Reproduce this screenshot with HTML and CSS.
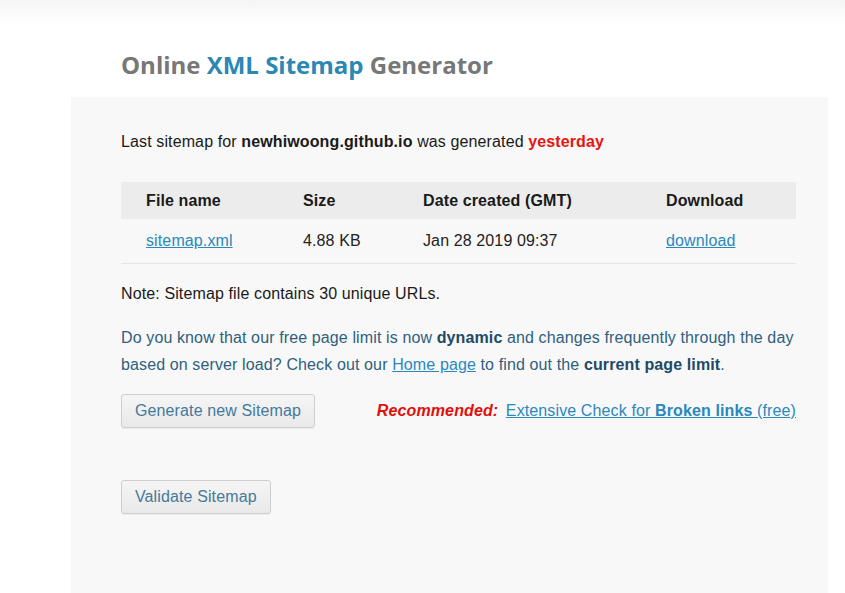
FILE: index.html
```html
<!DOCTYPE html>
<html>
<head>
<meta charset="utf-8">
<link rel="stylesheet" href="styles.css">
</head>
<body>
<header class="top">
  <h1 class="title">Online <span class="accent">XML Sitemap</span> Generator</h1>
</header>
<main class="panel">
  <p class="last">Last sitemap for <b>newhiwoong.github.io</b> was generated <b class="red">yesterday</b></p>
  <table class="files">
    <thead>
      <tr><th class="c1">File name</th><th class="c2">Size</th><th class="c3">Date created (GMT)</th><th class="c4">Download</th></tr>
    </thead>
    <tbody>
      <tr><td><a href="#">sitemap.xml</a></td><td>4.88 KB</td><td>Jan 28 2019 09:37</td><td><a href="#">download</a></td></tr>
    </tbody>
  </table>
  <p class="note">Note: Sitemap file contains 30 unique URLs.</p>
  <p class="info">Do you know that our free page limit is now <b>dynamic</b> and changes frequently through the day based on server load? Check out our <a href="#">Home page</a> to find out the <b>current page limit</b>.</p>
  <div class="actions">
    <button class="btn">Generate new Sitemap</button>
    <div class="rec"><span class="rec-label">Recommended:</span> <a href="#">Extensive Check for <b>Broken links </b>(free)</a></div>
  </div>
  <div class="validate">
    <button class="btn">Validate Sitemap</button>
  </div>
</main>
</body>
</html>
```

FILE: styles.css
```css
html, body {
  margin: 0;
  padding: 0;
}
body {
  background: linear-gradient(#f5f5f5 0, #ffffff 26px) no-repeat #fff;
  font-family: "Liberation Sans", Arial, sans-serif;
  font-size: 16px;
  letter-spacing: 0.12px;
  color: #1a1a1a;
  min-height: 593px;
}
.top {
  padding: 49px 0 0 121px;
  height: 48px;
}
.title {
  margin: 0;
  font-family: "Open Sans", sans-serif;
  font-weight: 700;
  font-size: 24px;
  line-height: 32px;
  color: #777777;
  letter-spacing: 0;
}
.accent {
  color: #2b87b3;
}
.panel {
  margin-left: 71px;
  width: 675px;
  padding: 35px 32px 80px 50px;
  background: #f8f8f8;
  min-height: 381px;
}
.last {
  margin: 0;
  line-height: 20px;
}
.red {
  color: #e8150f;
}
.files {
  margin-top: 30px;
  width: 675px;
  border-collapse: collapse;
  font-size: 16px;
}
.files th {
  text-align: left;
  background: #ececec;
  height: 37px;
  padding: 0;
  font-weight: 700;
  color: #1a1a1a;
}
.files td {
  height: 44px;
  padding: 0;
  border-bottom: 1px solid #e4e4e4;
  color: #222;
}
.files th:first-child, .files td:first-child {
  padding-left: 25px;
}
.c1 { width: 157px; }
.c2 { width: 120px; }
.c3 { width: 243px; }
a {
  color: #2a88bd;
  text-decoration: underline;
}
.note {
  margin: 20px 0 0;
  line-height: 20px;
}
.info {
  margin: 20px 0 0;
  line-height: 27px;
  color: #2f5f7e;
}
.info b {
  color: #1e4a66;
}
.actions {
  margin-top: 16px;
  display: flex;
  justify-content: space-between;
  align-items: center;
}
.btn {
  font-family: "Liberation Sans", Arial, sans-serif;
  font-size: 16px;
  letter-spacing: 0.12px;
  color: #45799b;
  background: linear-gradient(#f5f5f5, #e9e9e9);
  border: 1px solid #cfcfcf;
  border-radius: 3px;
  height: 34px;
  padding: 0 13px;
  box-shadow: 0 1px 1px rgba(0,0,0,0.06);
}
.rec {
  line-height: 20px;
}
.rec-label {
  color: #e0100c;
  font-weight: 700;
  font-style: italic;
  margin-right: 3px;
}
.validate {
  margin-top: 52px;
}
```
